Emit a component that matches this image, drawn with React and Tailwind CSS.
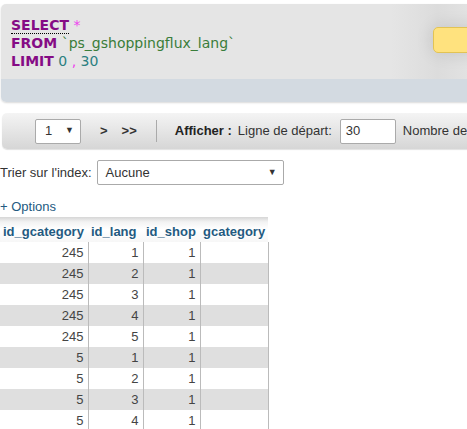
import React from 'react';

const rows = [
  [245, 1, 1],
  [245, 2, 1],
  [245, 3, 1],
  [245, 4, 1],
  [245, 5, 1],
  [5, 1, 1],
  [5, 2, 1],
  [5, 3, 1],
  [5, 4, 1],
];

const cols = [
  { name: 'id_gcategory', w: 'w-[88px]' },
  { name: 'id_lang', w: 'w-[55px]' },
  { name: 'id_shop', w: 'w-[57px]' },
  { name: 'gcategory', w: 'w-[68px]' },
];

export default function App() {
  return (
    <div className="w-[467px] h-[429px] overflow-hidden bg-white font-['Liberation_Sans',Arial,sans-serif] text-[13px] text-[#444]">
      {/* SQL query box */}
      <div className="mt-[4px] ml-[1px] w-[520px] rounded-l-[5px] overflow-hidden shadow-[0_1px_2px_rgba(0,0,0,0.15)]">
        <div className="h-[75px] flex bg-[linear-gradient(90deg,#e5e5e5_0%,#e5e5e5_75%,#dcdcdc_84%,#ececec_100%)]">
          <div className="pl-[10px] pt-[12px] font-['DejaVu_Sans',Verdana,sans-serif] text-[14px] leading-[18px]">
            <div>
              <span className="font-bold text-[#850b85] border-b border-dotted border-black">SELECT</span>{' '}
              <span className="text-[#ee44ee]">*</span>
            </div>
            <div>
              <span className="font-bold text-[#850b85]">FROM</span>{' '}
              <span className="text-[#3a7d3a]">`ps_gshoppingflux_lang`</span>
            </div>
            <div>
              <span className="font-bold text-[#850b85]">LIMIT</span>{' '}
              <span className="text-[#2b7f80]">0</span>{' '}
              <span className="text-[#ee44ee]">,</span>{' '}
              <span className="text-[#2b7f80]">30</span>
            </div>
          </div>
          <div className="ml-auto mr-[28px] mt-[23px] w-[60px] h-[26px] rounded-[5px] bg-[#ffe27e] border border-[#e2c354] shadow-[0_0_18px_rgba(0,0,0,0.12)]" />
        </div>
        <div className="h-[23px] bg-[#d3dae1]" />
      </div>

      {/* Navigation toolbar */}
      <div className="mt-[11px] ml-[2px] w-[520px] h-[36px] rounded-l-[5px] bg-[linear-gradient(#f4f4f4,#d6d6d6)] shadow-[0_1px_1px_rgba(0,0,0,0.12)] flex items-center text-[#333]">
        <div className="ml-[33px] w-[46px] h-[25px] bg-white border border-[#aaa] rounded-[2px] flex items-center pl-[9px] pr-[6px]">
          <span>1</span>
          <span className="ml-auto text-[9px]">▼</span>
        </div>
        <span className="ml-[19px] font-bold">&gt;</span>
        <span className="ml-[14px] font-bold">&gt;&gt;</span>
        <div className="ml-[19px] w-px h-[22px] bg-[#aaa]" />
        <span className="ml-[18px] font-bold text-[#222]">Afficher :</span>
        <span className="ml-[6px]">Ligne de départ:</span>
        <div className="ml-[8px] w-[56px] h-[25px] bg-white border border-[#aaa] rounded-[2px] flex items-center pl-[5px]">30</div>
        <span className="ml-[7px] whitespace-nowrap">Nombre de lignes</span>
      </div>

      {/* Sort by index */}
      <div className="mt-[11px] h-[25px] flex items-center text-[#333]">
        <span>Trier sur l'index:</span>
        <div className="ml-[5px] w-[187px] h-[25px] bg-white border border-[#aaa] rounded-[2px] flex items-center pl-[8px] pr-[6px]">
          <span>Aucune</span>
          <span className="ml-auto text-[9px]">▼</span>
        </div>
      </div>

      <div className="mt-[14px] h-[16px] leading-[16px] text-[#235a81]">+ Options</div>

      {/* Result table */}
      <table className="mt-[2px] border-collapse">
        <thead>
          <tr className="h-[25px]">
            {cols.map((c) => (
              <th
                key={c.name}
                className={`${c.w} px-[3px] pt-[4px] text-left font-bold text-[#235a81] bg-[linear-gradient(#d6d6d6_0%,#f3f3f3_20%,#ffffff_50%,#f7f7f7_100%)] [text-shadow:0_1px_0_#fff]`}
              >
                {c.name}
              </th>
            ))}
          </tr>
        </thead>
        <tbody>
          {rows.map((r, i) => (
            <tr key={i} className={`h-[21px] ${i % 2 ? 'bg-[#dfdfdf]' : 'bg-white'}`}>
              {r.map((v, j) => (
                <td key={j} className="px-[4px] text-right border-r border-[#bbb] leading-[20px]">
                  {v}
                </td>
              ))}
              <td className="border-r border-[#bbb]" />
            </tr>
          ))}
        </tbody>
      </table>
    </div>
  );
}
